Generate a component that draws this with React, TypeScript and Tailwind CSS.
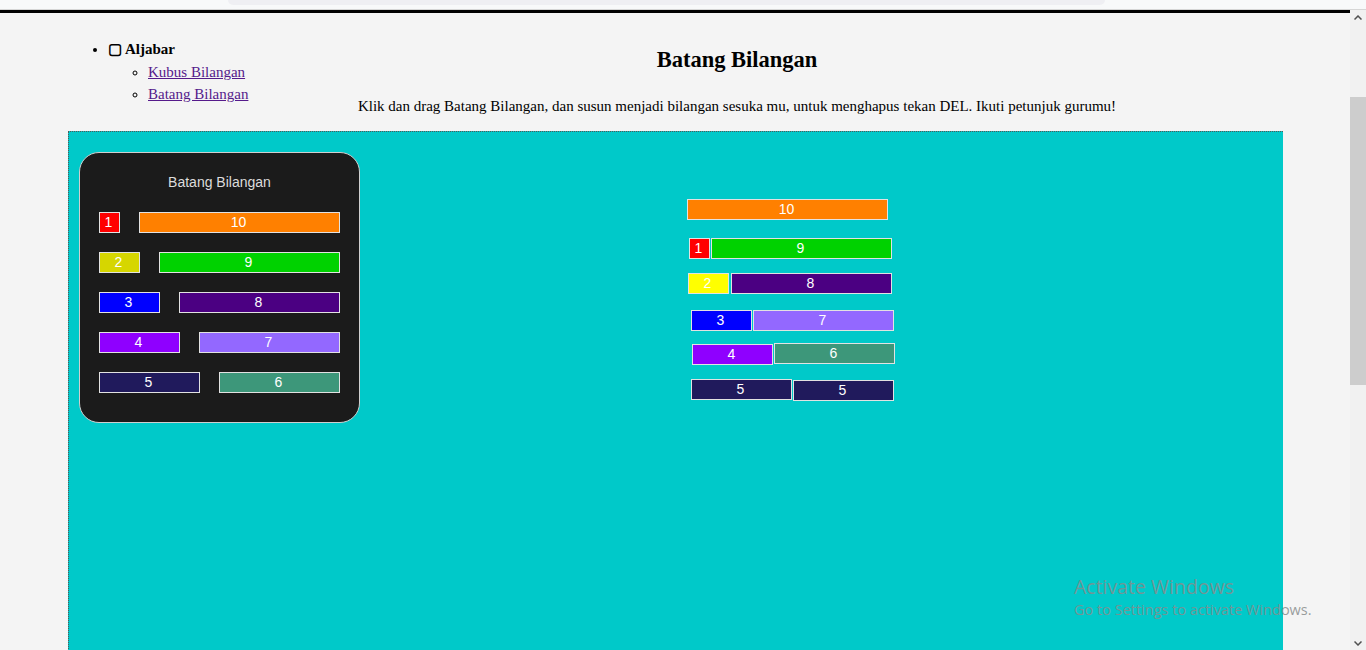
import React from "react";

type Bar = { n: number; color: string; x?: number; y?: number };

const panelRows: [Bar, Bar][] = [
  [{ n: 1, color: "#ff0000" }, { n: 10, color: "#ff8000" }],
  [{ n: 2, color: "#d6d600" }, { n: 9, color: "#00d200" }],
  [{ n: 3, color: "#0000ff" }, { n: 8, color: "#4b0082" }],
  [{ n: 4, color: "#8f00ff" }, { n: 7, color: "#9368ff" }],
  [{ n: 5, color: "#201a5c" }, { n: 6, color: "#3d977a" }],
];

const placed: Bar[] = [
  { n: 10, color: "#ff8000", x: 618, y: 67 },
  { n: 1, color: "#ff0000", x: 620, y: 106 },
  { n: 9, color: "#00d200", x: 642, y: 106 },
  { n: 2, color: "#ffff00", x: 619, y: 141 },
  { n: 8, color: "#4b0082", x: 662, y: 141 },
  { n: 3, color: "#0000ff", x: 622, y: 178 },
  { n: 7, color: "#9368ff", x: 684, y: 178 },
  { n: 4, color: "#8f00ff", x: 623, y: 212 },
  { n: 6, color: "#3d977a", x: 705, y: 211 },
  { n: 5, color: "#201a5c", x: 622, y: 247 },
  { n: 5, color: "#201a5c", x: 724, y: 248 },
];

const arial = { fontFamily: '"Liberation Sans", Arial, sans-serif' };

function BarBox({ bar, absolute }: { bar: Bar; absolute?: boolean }) {
  const style: React.CSSProperties = {
    width: bar.n * 20 + 1,
    backgroundColor: bar.color,
    ...arial,
  };
  if (absolute) {
    style.left = bar.x;
    style.top = bar.y;
  }
  return (
    <div
      className={
        (absolute ? "absolute " : "") +
        "h-[21px] box-border border border-[#e2e2e2] text-white text-[14px] leading-[19px] text-center pr-[2px]"
      }
      style={style}
    >
      {bar.n}
    </div>
  );
}

export default function App() {
  return (
    <div className="relative w-[1366px] h-[650px] overflow-hidden bg-[#f4f4f4]">
      {/* browser chrome strip */}
      <div className="h-[10px] bg-[#f8f9fa] border-b border-[#d6d6d6] flex">
        <div className="ml-[228px] w-[877px] h-[5px] rounded-b-[6px] bg-[#efeff3]" />
      </div>
      <div className="flex h-[640px]">
        {/* page */}
        <div className="w-[1350px] h-[640px] overflow-hidden" style={{ fontFamily: '"Liberation Serif", "Times New Roman", serif' }}>
          <div className="h-[3px] bg-black" />
          <div className="flex h-[118px]">
            <div className="w-[260px] pt-[25px]">
              <ul className="list-disc ml-[68px] pl-[40px] text-[15px] leading-[22.5px] text-black">
                <li>
                  <span className="font-bold">▢ Aljabar</span>
                  <ul className="list-[circle] pl-[40px]">
                    <li>
                      <a className="underline text-[#551a8b]">Kubus Bilangan</a>
                    </li>
                    <li>
                      <a className="underline text-[#551a8b]">Batang Bilangan</a>
                    </li>
                  </ul>
                </li>
              </ul>
            </div>
            <div className="flex-1 mr-[136px] text-center text-black">
              <h2 className="mt-[33px] h-[28px] text-[22.5px] leading-[28px] font-bold">Batang Bilangan</h2>
              <p className="mt-[21px] h-[22px] text-[15px] leading-[22px]">
                Klik dan drag Batang Bilangan, dan susun menjadi bilangan sesuka mu, untuk menghapus tekan DEL. Ikuti petunjuk gurumu!
              </p>
            </div>
          </div>
          {/* canvas */}
          <div className="relative ml-[68px] w-[1215px] h-[600px] bg-[#00c9c9] border-t border-l border-dotted border-[#555555]">
            <div className="ml-[10px] mt-[20px] w-[281px] h-[271px] box-border rounded-[20px] border border-[#cfcfcf] bg-[#1b1b1b] pl-[19px] pt-[19px]">
              <div className="w-[241px] text-center text-[14px] leading-[20px] text-[#dddddd]" style={arial}>
                Batang Bilangan
              </div>
              <div className="mt-[20px] flex flex-col gap-[19px]">
                {panelRows.map((row, i) => (
                  <div key={i} className="flex gap-[19px]">
                    <BarBox bar={row[0]} />
                    <BarBox bar={row[1]} />
                  </div>
                ))}
              </div>
            </div>
            {placed.map((b, i) => (
              <BarBox key={i} bar={b} absolute />
            ))}
          </div>
        </div>
        {/* scrollbar */}
        <div className="w-[16px] h-[640px] bg-[#f1f1f1] flex flex-col items-center">
          <div className="h-[14px] flex items-center justify-center">
            <svg width="8" height="5" viewBox="0 0 8 5"><path d="M0.5 4.5 L4 1 L7.5 4.5" stroke="#505050" strokeWidth="1.5" fill="none" /></svg>
          </div>
          <div className="mt-[73px] w-[16px] h-[288px] bg-[#cdcdcd]" />
          <div className="flex-1" />
          <div className="h-[14px] flex items-center justify-center">
            <svg width="8" height="5" viewBox="0 0 8 5"><path d="M0.5 0.5 L4 4 L7.5 0.5" stroke="#505050" strokeWidth="1.5" fill="none" /></svg>
          </div>
        </div>
      </div>
      {/* Windows activation watermark */}
      <div className="absolute left-[1074px] top-[574px] pointer-events-none" style={{ fontFamily: '"Open Sans", "Noto Sans", sans-serif', color: "rgba(135,140,140,0.85)" }}>
        <div className="text-[19.5px] leading-[26px]">Activate Windows</div>
        <div className="text-[14.5px] leading-[20px]">Go to Settings to activate Windows.</div>
      </div>
    </div>
  );
}
